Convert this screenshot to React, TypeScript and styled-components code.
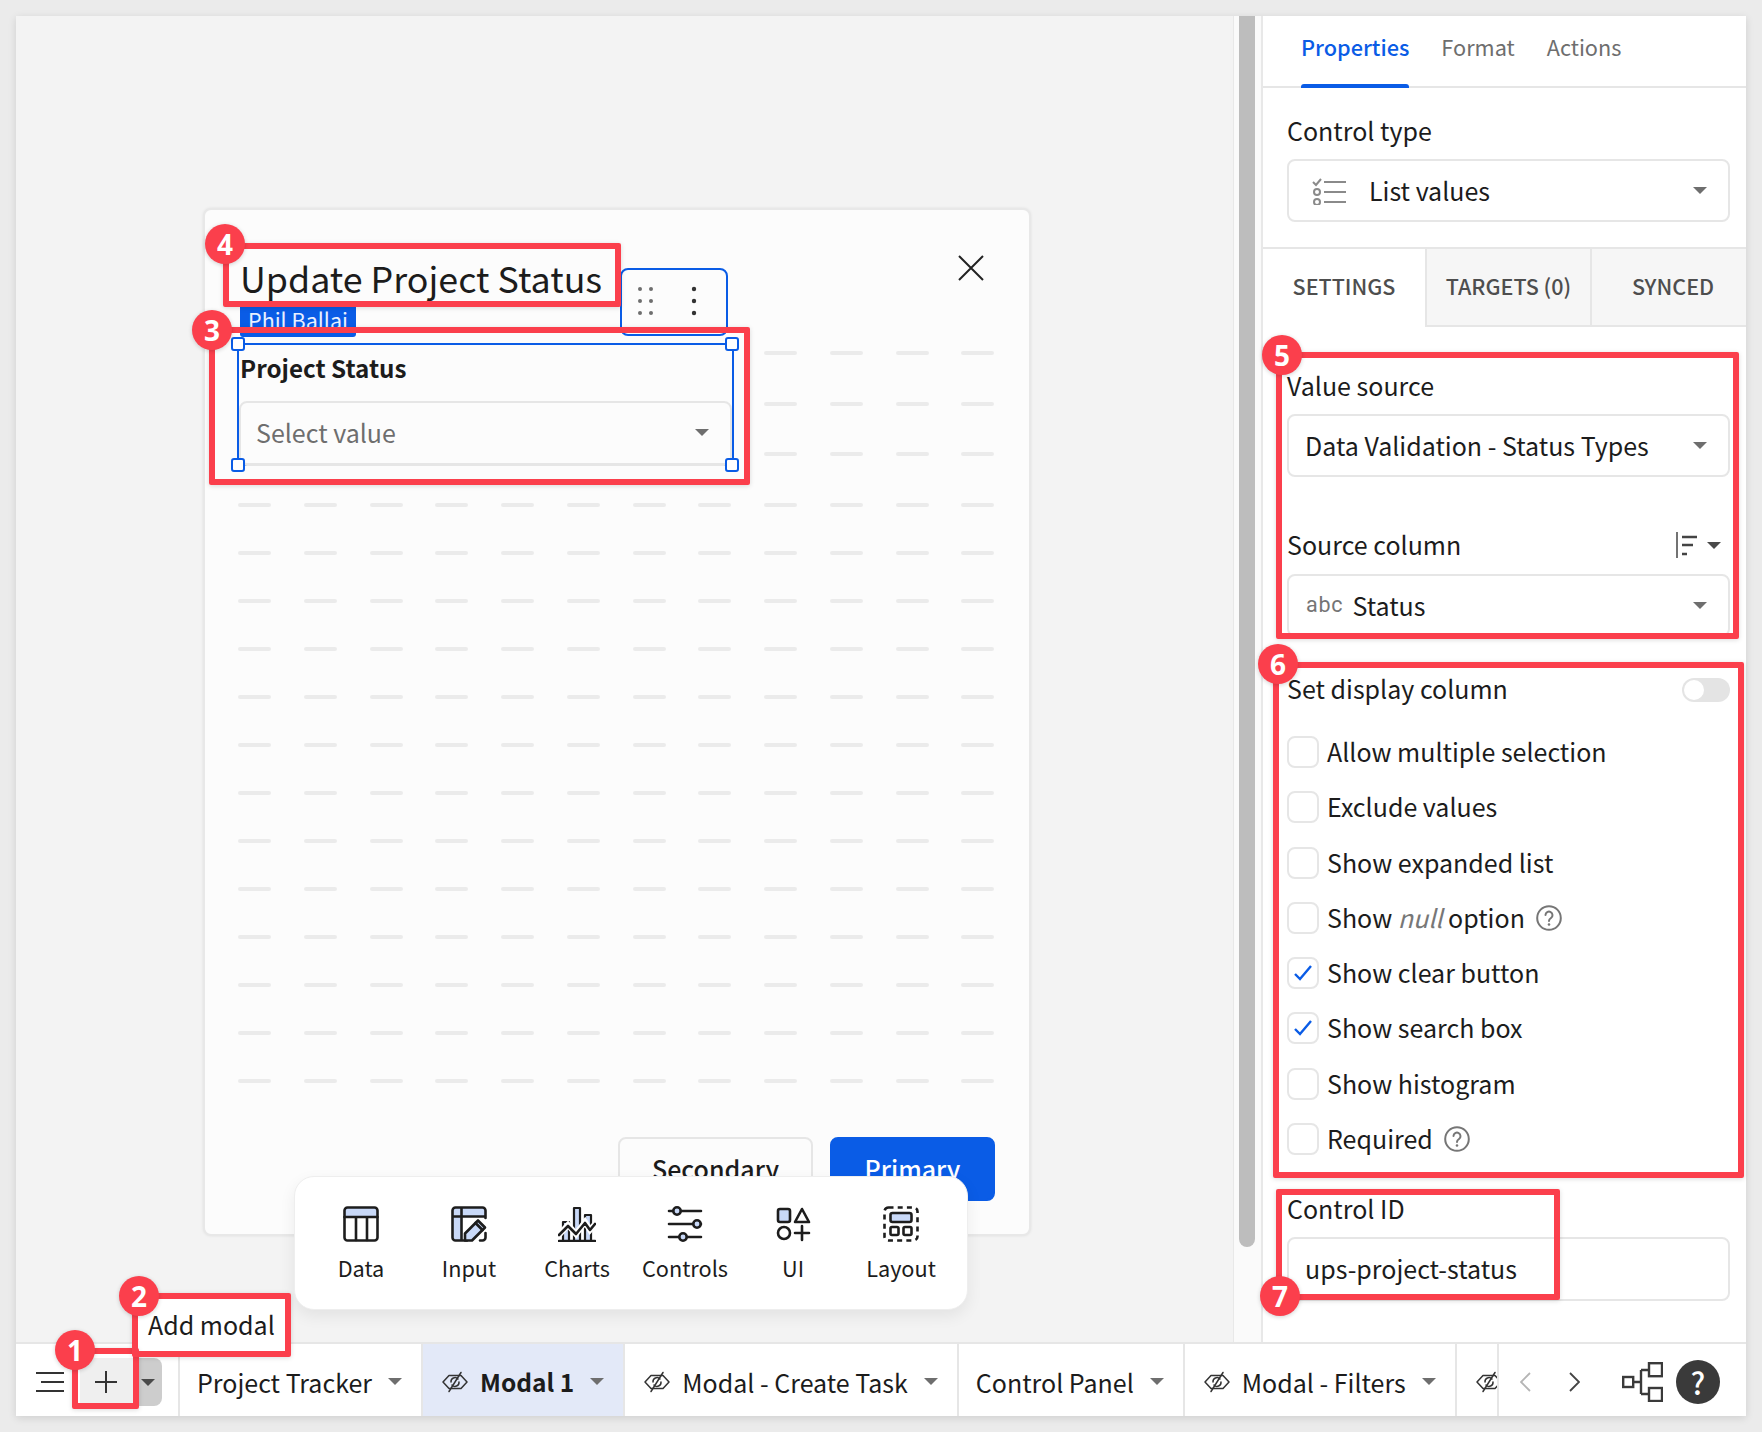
import React from "react";
import styled, { createGlobalStyle } from "styled-components";

const BLUE = "#0a5ce6";
const RED = "#fb3f4c";
const INK = "#1c1c1c";
const LINE = "#e6e6e6";
const TINT = "#c9d9f8";
const SANS = `"Noto Sans CJK JP", "Noto Sans", sans-serif`;

const Global = createGlobalStyle`
  html, body { margin: 0; padding: 0; background: #ebebeb; }
  body { font-family: ${SANS}; color: ${INK}; font-size: 25px; line-height: 30px; }
  * { box-sizing: border-box; }
`;

const Page = styled.div`
  position: relative;
  width: 1762px;
  height: 1432px;
  padding: 16px;
  overflow: hidden;
`;
const Window = styled.div`
  width: 1730px;
  height: 1400px;
  display: flex;
  flex-direction: column;
  background: #fff;
  box-shadow: 0 2px 8px rgba(0, 0, 0, 0.12);
`;
const Main = styled.div`
  flex: 1;
  display: flex;
  min-height: 0;
`;
const Canvas = styled.div`
  position: relative;
  flex: 1;
  background: #f3f3f3;
  padding: 192px 0 0 187px;
`;
const Track = styled.div`
  width: 30px;
  background: #fafafa;
  border-left: 1px solid #e8e8e8;
  border-right: 2px solid #e8e8e8;
  padding-left: 5px;
`;
const Thumb = styled.div`
  width: 16px;
  height: 1231px;
  background: #bdbdbd;
  border-radius: 0 0 8px 8px;
`;

/* modal */
const Modal = styled.div`
  position: relative;
  width: 828px;
  height: 1028px;
  background: #fcfcfc;
  border: 2px solid #e8e8e8;
  border-radius: 8px;
  box-shadow: 0 0 3px rgba(0, 0, 0, 0.08);
  display: flex;
  flex-direction: column;
  padding: 43px 34px 33px 32px;
`;
const DashGrid = styled.div`
  position: absolute;
  left: 33px;
  top: 141px;
  display: grid;
  grid-template-columns: repeat(12, 33px);
  column-gap: 32.75px;
  grid-template-rows: repeat(3, 50.7px) repeat(13, 48px);
`;
const Dash = styled.span`
  width: 33px;
  height: 4px;
  border-radius: 2px;
  background: #ebebeb;
`;
const Title = styled.h1`
  position: relative;
  margin: 0 0 0 3px;
  font-size: 35.8px;
  font-weight: 400;
  line-height: 48px;
`;
const CloseIcon = styled.svg`
  position: absolute;
  right: 45px;
  top: 45px;
`;
const ControlBox = styled.div`
  position: relative;
  width: 497px;
  height: 123px;
  margin-top: 42px;
  background: #fcfcfc;
  border: 2px solid ${BLUE};
  padding: 8px 0 0 1px;
`;
const NameTag = styled.div`
  position: absolute;
  left: 1px;
  top: -38px;
  width: 116px;
  height: 30px;
  background: ${BLUE};
  border-radius: 0 0 3px 3px;
  color: #e8f0ff;
  font-size: 21.5px;
  line-height: 25px;
  text-align: center;
`;
const Grip = styled.div`
  position: absolute;
  left: 381px;
  top: -77px;
  width: 108px;
  height: 68px;
  border: 2px solid ${BLUE};
  border-radius: 8px;
  background: #fcfcfc;
`;
const GripIcon = styled.svg`
  position: absolute;
  left: 15px;
  top: 16px;
`;
const Handle = styled.span<{ $r?: boolean; $b?: boolean }>`
  position: absolute;
  width: 14px;
  height: 14px;
  background: #fff;
  border: 2px solid ${BLUE};
  border-radius: 3px;
  ${(p) => (p.$r ? "right: -7px;" : "left: -8px;")}
  ${(p) => (p.$b ? "bottom: -8px;" : "top: -8px;")}
`;
const ControlLabel = styled.div`
  font-weight: 700;
  font-size: 24.2px;
  line-height: 30px;
`;
const ControlSelect = styled.div`
  display: flex;
  align-items: center;
  justify-content: space-between;
  height: 65px;
  margin: 18px 0 0 -1px;
  width: 493px;
  border: 2px solid ${LINE};
  border-bottom-width: 3px;
  border-radius: 8px;
  padding: 0 21px 2px 15px;
  color: #6e6e6e;
`;
const Footer = styled.div`
  margin-top: auto;
  display: flex;
  justify-content: flex-end;
  gap: 17px;
`;
const Btn = styled.div<{ $primary?: boolean }>`
  height: 64px;
  width: ${(p) => (p.$primary ? "165px" : "195px")};
  display: flex;
  align-items: center;
  justify-content: center;
  padding-bottom: 2px;
  border-radius: 8px;
  font-weight: 500;
  background: ${(p) => (p.$primary ? BLUE : "#fcfcfc")};
  color: ${(p) => (p.$primary ? "#fff" : INK)};
  border: 2px solid ${(p) => (p.$primary ? BLUE : LINE)};
`;

/* action bar */
const ActionBar = styled.div`
  position: absolute;
  left: 278px;
  top: 1160px;
  width: 674px;
  height: 134px;
  background: #fff;
  border: 1px solid #eee;
  border-radius: 20px;
  box-shadow: 0 6px 16px rgba(0, 0, 0, 0.07);
  display: flex;
  padding: 0 12px;
`;
const Action = styled.div`
  width: 108px;
  display: flex;
  flex-direction: column;
  align-items: center;
  padding-top: 29px;
`;
const ActionLabel = styled.div`
  margin-top: 11px;
  font-size: 21.7px;
  line-height: 30px;
  white-space: nowrap;
`;

/* right panel */
const Panel = styled.div`
  width: 483px;
  display: flex;
  flex-direction: column;
  background: #fff;
`;
const PanelTabs = styled.div`
  height: 72px;
  border-bottom: 2px solid ${LINE};
  display: flex;
  gap: 32px;
  padding-left: 38px;
  flex: none;
`;
const PanelTab = styled.div<{ $active?: boolean }>`
  position: relative;
  padding-top: 16px;
  font-size: 21.7px;
  color: ${(p) => (p.$active ? BLUE : "#6e6e6e")};
  font-weight: ${(p) => (p.$active ? 500 : 400)};
  ${(p) =>
    p.$active &&
    `&::after { content: ""; position: absolute; left: 0; right: 0; bottom: -2px; height: 4px; background: ${BLUE}; border-radius: 3px 3px 0 0; }`}
`;
const TypeSection = styled.div`
  flex: none;
  height: 161px;
  padding: 29px 16px 0 24px;
  border-bottom: 2px solid ${LINE};
`;
const FieldLabel = styled.div`
  display: flex;
  align-items: center;
  justify-content: space-between;
  line-height: 30px;
  height: 30px;
  padding-bottom: 4px;
`;
const Select = styled.div<{ $mt?: number }>`
  display: flex;
  align-items: center;
  height: 63px;
  margin-top: ${(p) => p.$mt ?? 12}px;
  border: 2px solid ${LINE};
  border-radius: 8px;
  padding: 0 21px 0 16px;
`;
const SelectText = styled.span`
  flex: 1;
  white-space: nowrap;
  padding-bottom: 2px;
`;
const Caret = styled.span<{ $dark?: boolean }>`
  flex: none;
  display: inline-block;
  width: 0;
  height: 0;
  border-left: 7px solid transparent;
  border-right: 7px solid transparent;
  border-top: 7px solid ${(p) => (p.$dark ? "#4a4a4a" : "#6e6e6e")};
`;
const ListIcon = styled.svg`
  margin: 0 23px 0 7px;
  flex: none;
`;
const SubTabs = styled.div`
  flex: none;
  height: 78px;
  display: flex;
`;
const SubTab = styled.div<{ $w: number; $active?: boolean; $pl?: number }>`
  width: ${(p) => p.$w}px;
  flex: ${(p) => (p.$w ? "none" : 1)};
  display: flex;
  align-items: center;
  justify-content: center;
  padding: 0 0 3px ${(p) => p.$pl ?? 0}px;
  font-size: 21.5px;
  font-weight: 500;
  color: #4e4e4e;
  background: ${(p) => (p.$active ? "#fff" : "#f6f6f6")};
  border-bottom: 2px solid ${(p) => (p.$active ? "#fff" : LINE)};
  border-left: ${(p) => (p.$active ? "0" : `2px solid ${LINE}`)};
`;
const Settings = styled.div`
  padding: 45px 16px 0 24px;
`;
const SortGroup = styled.span`
  display: flex;
  align-items: center;
  gap: 10px;
  margin: 2px 9px 0 0;
`;
const TypeTag = styled.span`
  font-family: Roboto, sans-serif;
  font-size: 21.5px;
  color: #757575;
  letter-spacing: 0.8px;
  margin: 0 9px 0 1px;
  padding-bottom: 2px;
`;
const SpacedLabel = styled(FieldLabel)<{ $mt: number }>`
  margin-top: ${(p) => p.$mt}px;
`;
const Toggle = styled.span`
  position: relative;
  width: 48px;
  height: 24px;
  margin-top: 4px;
  border-radius: 12px;
  background: #e4e4e4;
  &::after {
    content: "";
    position: absolute;
    left: 2px;
    top: 2px;
    width: 20px;
    height: 20px;
    border-radius: 50%;
    background: #fff;
  }
`;
const CheckList = styled.div`
  margin-top: 31px;
  display: flex;
  flex-direction: column;
  gap: 23.3px;
`;
const CheckRow = styled.div`
  display: flex;
  align-items: center;
  height: 32px;
  gap: 8px;
`;
const CheckBox = styled.span`
  width: 32px;
  height: 32px;
  flex: none;
  border: 2px solid ${LINE};
  border-radius: 8px;
  display: flex;
  align-items: center;
  justify-content: center;
`;
const CheckText = styled.span`
  padding-bottom: 2px;
  white-space: nowrap;
`;
const Muted = styled.em`
  color: #777;
`;
const HelpIcon = styled.svg`
  margin-left: 3px;
  flex: none;
`;
const TextField = styled.div`
  height: 64px;
  margin-top: 12px;
  border: 2px solid ${LINE};
  border-radius: 8px;
  padding: 0 16px 2px;
  display: flex;
  align-items: center;
`;

/* bottom bar */
const BottomBar = styled.div`
  flex: none;
  height: 74px;
  display: flex;
  background: #fff;
  border-top: 2px solid ${LINE};
`;
const Tools = styled.div`
  flex: none;
  width: 164px;
  display: flex;
  align-items: center;
  padding: 4px 0 0 19px;
  border-right: 2px solid ${LINE};
`;
const PlusBtn = styled.div`
  margin-left: 15px;
  width: 54px;
  height: 48px;
  padding-right: 2px;
  background: #efefef;
  display: flex;
  align-items: center;
  justify-content: center;
`;
const PlusCaret = styled.div`
  width: 28px;
  height: 48px;
  background: #cdcdcd;
  border-radius: 0 8px 8px 0;
  display: flex;
  align-items: center;
  justify-content: center;
`;
const SheetTabs = styled.div`
  flex: 1;
  display: flex;
  overflow: hidden;
  min-width: 0;
`;
const SheetTab = styled.div<{ $active?: boolean }>`
  flex: none;
  display: flex;
  align-items: center;
  gap: 11px;
  padding: 3px 19px 0 17px;
  white-space: nowrap;
  font-size: ${(p) => (p.$active ? "24.5px" : "25px")};
  font-weight: ${(p) => (p.$active ? 700 : 400)};
  background: ${(p) => (p.$active ? "#e3e9f8" : "#fff")};
  border-right: 2px solid ${LINE};
`;
const TabCaret = styled(Caret)`
  margin-left: 5px;
`;
const Right = styled.div`
  flex: none;
  width: 249px;
  display: flex;
  align-items: center;
  border-left: 2px solid ${LINE};
  padding: 4px 0 0 21px;
`;
const ChevRow = styled.div`
  display: flex;
  gap: 38px;
  margin-right: 42px;
`;
const HelpDot = styled.div`
  margin-left: 13px;
  width: 44px;
  height: 44px;
  border-radius: 50%;
  background: #3a3a3a;
  color: #fff;
  font-size: 30px;
  font-weight: 500;
  line-height: 44px;
  text-align: center;
`;
const EyeSvg = styled.svg`
  flex: none;
  margin: 0 1px 0 2px;
`;

/* annotations */
const Box = styled.div<{ $x: number; $y: number; $w: number; $h: number }>`
  position: absolute;
  left: ${(p) => p.$x}px;
  top: ${(p) => p.$y}px;
  width: ${(p) => p.$w}px;
  height: ${(p) => p.$h}px;
  border: 6px solid ${RED};
  border-radius: 2px;
  box-shadow: 0 1px 5px rgba(0, 0, 0, 0.14);
`;
const Badge = styled.div<{ $x: number; $y: number }>`
  position: absolute;
  left: ${(p) => p.$x - 20}px;
  top: ${(p) => p.$y - 20}px;
  width: 40px;
  height: 40px;
  border-radius: 50%;
  background: ${RED};
  color: #fff;
  font-family: "Open Sans", sans-serif;
  font-weight: 700;
  font-size: 28px;
  line-height: 40px;
  text-align: center;
  box-shadow: 0 1px 4px rgba(0, 0, 0, 0.18);
`;
const Tooltip = styled.div`
  position: absolute;
  left: 137px;
  top: 1298px;
  width: 150px;
  height: 56px;
  background: #fff;
  line-height: 52px;
  padding-left: 11px;
  white-space: nowrap;
`;

const Stroke = { fill: "none", stroke: "#1d1d1d", strokeWidth: 2.6, strokeLinejoin: "round" as const, strokeLinecap: "round" as const };

const DataIcon = () => (
  <svg width="36" height="36" viewBox="0 0 36 36">
    <path d="M1.5 11V4.5a3 3 0 0 1 3-3h27a3 3 0 0 1 3 3V11z" fill={TINT} />
    <rect x="1.5" y="1.5" width="33" height="33" rx="3" {...Stroke} />
    <path d="M1.5 11h33M13 11v23M24 11v23" {...Stroke} />
  </svg>
);
const InputIcon = () => (
  <svg width="36" height="36" viewBox="0 0 36 36">
    <path d="M2 10V4a2 2 0 0 1 2-2h28a2 2 0 0 1 2 2v6H11v24H4a2 2 0 0 1-2-2z" fill={TINT} />
    <path d="M16 34.500H4.500a3 3 0 0 1-3-3V4.500a3 3 0 0 1 3-3h27a3 3 0 0 1 3 3V12M1.500 10.500h33M10.500 1.500V34M34.500 27v4.500a3 3 0 0 1-3 3H29" {...Stroke} />
    <path d="M14 34.500v-7L27 14.500l7 7L21 34.500z" fill={TINT} stroke="#1d1d1d" strokeWidth="2.6" strokeLinejoin="round" />
    <path d="M24.500 17l7 7" {...Stroke} />
  </svg>
);
const ChartsIcon = () => (
  <svg width="38" height="36" viewBox="0 0 38 36">
    <path d="M5 16h6v19H5zM16 2h6v33h-6zM27 9h6v26h-6z" fill={TINT} stroke="#1d1d1d" strokeWidth="2.2" strokeLinejoin="round" />
    <path d="M0 30l10-11 8 9 9-12 5 8 6-7" fill="none" stroke="#fff" strokeWidth="6" />
    <path d="M1 29l9-9 8 8 9-11 5 7 5-6" {...Stroke} />
    <path d="M1 35h36" {...Stroke} />
  </svg>
);
const ControlsIcon = () => (
  <svg width="36" height="36" viewBox="0 0 36 36">
    <path d="M2 5h32M2 18h32M2 31h32" {...Stroke} />
    <circle cx="10" cy="5" r="3.700" fill={TINT} stroke="#1d1d1d" strokeWidth="2.600" />
    <circle cx="30" cy="18" r="3.700" fill={TINT} stroke="#1d1d1d" strokeWidth="2.600" />
    <circle cx="16" cy="31" r="3.700" fill={TINT} stroke="#1d1d1d" strokeWidth="2.600" />
  </svg>
);
const UiIcon = () => (
  <svg width="36" height="36" viewBox="0 0 36 36">
    <rect x="3" y="3" width="12" height="13" rx="2" fill={TINT} stroke="#1d1d1d" strokeWidth="2.600" />
    <path d="M27 3l7 13H20z" {...Stroke} />
    <circle cx="9" cy="27" r="6" {...Stroke} />
    <path d="M27 20v14M20 27h14" {...Stroke} />
  </svg>
);
const LayoutIcon = () => (
  <svg width="36" height="36" viewBox="0 0 36 36">
    <rect x="1.500" y="1.500" width="33" height="33" rx="4" fill="none" stroke="#1d1d1d" strokeWidth="2.600" strokeDasharray="5 4.200" />
    <rect x="7.500" y="7" width="21" height="9" rx="2" fill={TINT} stroke="#1d1d1d" strokeWidth="2.600" />
    <rect x="7.500" y="21" width="8" height="8" rx="1.500" {...Stroke} />
    <rect x="20.500" y="21" width="8" height="8" rx="1.500" {...Stroke} />
  </svg>
);
const EyeOff = () => (
  <EyeSvg width="26" height="22" viewBox="0 0 26 22">
    <path d="M1 11l6-6.500h12l6 6.500-6 6.500H7z" fill="none" stroke="#333" strokeWidth="1.500" strokeLinejoin="round" />
    <path d="M9 11a4 4 0 0 1 7-3M17 11a4 4 0 0 1-7 3M19 1.500L7 20.500" fill="none" stroke="#333" strokeWidth="1.500" strokeLinecap="round" />
  </EyeSvg>
);
const Help = () => (
  <HelpIcon width="26" height="26" viewBox="0 0 26 26">
    <circle cx="13" cy="13" r="11.800" fill="none" stroke="#767676" strokeWidth="2" />
    <path d="M9.500 10a3.500 3.500 0 1 1 5.500 3c-1.300.9-2 1.500-2 3" fill="none" stroke="#767676" strokeWidth="2" strokeLinecap="round" />
    <circle cx="13" cy="19.500" r="1.300" fill="#767676" />
  </HelpIcon>
);
const Check = () => (
  <svg width="20" height="18" viewBox="0 0 20 18">
    <path d="M2 10l5 5L18 2" fill="none" stroke={BLUE} strokeWidth="2.400" />
  </svg>
);

const checks: { label: React.ReactNode; on?: boolean; help?: boolean }[] = [
  { label: "Allow multiple selection" },
  { label: "Exclude values" },
  { label: "Show expanded list" },
  { label: <>Show <Muted>null</Muted> option</>, help: true },
  { label: "Show clear button", on: true },
  { label: "Show search box", on: true },
  { label: "Show histogram" },
  { label: "Required", help: true },
];
const actions = [
  { label: "Data", icon: <DataIcon /> },
  { label: "Input", icon: <InputIcon /> },
  { label: "Charts", icon: <ChartsIcon /> },
  { label: "Controls", icon: <ControlsIcon /> },
  { label: "UI", icon: <UiIcon /> },
  { label: "Layout", icon: <LayoutIcon /> },
];

export default function App() {
  return (
    <Page>
      <Global />
      <Window>
        <Main>
          <Canvas>
            <Modal>
              <DashGrid>
                {Array.from({ length: 192 }, (_, i) => <Dash key={i} />)}
              </DashGrid>
              <Title>Update Project Status</Title>
              <CloseIcon width="26" height="26" viewBox="0 0 26 26">
                <path d="M1 1l24 24M25 1L1 25" stroke="#222" strokeWidth="2" fill="none" />
              </CloseIcon>
              <ControlBox>
                <NameTag>Phil Ballai</NameTag>
                <Grip>
                  <GripIcon width="70" height="32" viewBox="0 0 70 32">
                    <g fill="#6e6e6e">
                      {[3, 15, 27].flatMap((y) => [3, 14].map((x) => <circle key={`${x}-${y}`} cx={x} cy={y} r="2" />))}
                    </g>
                    <g fill="#333">
                      {[3, 15, 27].map((y) => <circle key={y} cx="57" cy={y} r="2.200" />)}
                    </g>
                  </GripIcon>
                </Grip>
                <Handle />
                <Handle $r />
                <Handle $b />
                <Handle $r $b />
                <ControlLabel>Project Status</ControlLabel>
                <ControlSelect>
                  <span>Select value</span>
                  <Caret />
                </ControlSelect>
              </ControlBox>
              <Footer>
                <Btn>Secondary</Btn>
                <Btn $primary>Primary</Btn>
              </Footer>
            </Modal>
            <ActionBar>
              {actions.map((a) => (
                <Action key={a.label}>
                  {a.icon}
                  <ActionLabel>{a.label}</ActionLabel>
                </Action>
              ))}
            </ActionBar>
          </Canvas>
          <Track>
            <Thumb />
          </Track>
          <Panel>
            <PanelTabs>
              <PanelTab $active>Properties</PanelTab>
              <PanelTab>Format</PanelTab>
              <PanelTab>Actions</PanelTab>
            </PanelTabs>
            <TypeSection>
              <FieldLabel>Control type</FieldLabel>
              <Select>
                <ListIcon width="34" height="28" viewBox="0 0 34 28">
                  <path d="M1 5l3 3 5-6" fill="none" stroke="#8a8a8a" strokeWidth="2" />
                  <circle cx="5" cy="15" r="3" fill="none" stroke="#8a8a8a" strokeWidth="2" />
                  <circle cx="5" cy="25" r="3" fill="none" stroke="#8a8a8a" strokeWidth="2" />
                  <path d="M12 5h22M12 15h22M12 25h22" stroke="#8a8a8a" strokeWidth="2" />
                </ListIcon>
                <SelectText>List values</SelectText>
                <Caret />
              </Select>
            </TypeSection>
            <SubTabs>
              <SubTab $w={162} $active>SETTINGS</SubTab>
              <SubTab $w={165}>TARGETS (0)</SubTab>
              <SubTab $w={0} $pl={8}>SYNCED</SubTab>
            </SubTabs>
            <Settings>
              <FieldLabel>Value source</FieldLabel>
              <Select>
                <SelectText>Data Validation - Status Types</SelectText>
                <Caret />
              </Select>
              <SpacedLabel $mt={54}>
                Source column
                <SortGroup>
                  <svg width="21" height="26" viewBox="0 0 21 26">
                    <path d="M1 0v26" stroke="#444" strokeWidth="1.500" />
                    <path d="M6 5h15M6 13h11M6 22h5" stroke="#444" strokeWidth="2.600" />
                  </svg>
                  <Caret $dark />
                </SortGroup>
              </SpacedLabel>
              <Select $mt={13}>
                <TypeTag>abc</TypeTag>
                <SelectText>Status</SelectText>
                <Caret />
              </Select>
              <SpacedLabel $mt={38}>
                Set display column
                <Toggle />
              </SpacedLabel>
              <CheckList>
                {checks.map((c, i) => (
                  <CheckRow key={i}>
                    <CheckBox>{c.on && <Check />}</CheckBox>
                    <CheckText>{c.label}</CheckText>
                    {c.help && <Help />}
                  </CheckRow>
                ))}
              </CheckList>
              <SpacedLabel $mt={40}>Control ID</SpacedLabel>
              <TextField>ups-project-status</TextField>
            </Settings>
          </Panel>
        </Main>
        <BottomBar>
          <Tools>
            <svg width="30" height="22" viewBox="0 0 30 22" style={{ flex: "none" }}>
              <path d="M1 2h28M6 11h23M1 20h28" stroke="#333" strokeWidth="2" />
            </svg>
            <PlusBtn>
              <svg width="22" height="22" viewBox="0 0 22 22">
                <path d="M11 0v22M0 11h22" stroke="#333" strokeWidth="2" />
              </svg>
            </PlusBtn>
            <PlusCaret><Caret $dark /></PlusCaret>
          </Tools>
          <SheetTabs>
            <SheetTab>Project Tracker<TabCaret /></SheetTab>
            <SheetTab $active><EyeOff />Modal 1<TabCaret /></SheetTab>
            <SheetTab><EyeOff />Modal - Create Task<TabCaret /></SheetTab>
            <SheetTab>Control Panel<TabCaret /></SheetTab>
            <SheetTab><EyeOff />Modal - Filters<TabCaret /></SheetTab>
            <SheetTab><EyeOff /></SheetTab>
          </SheetTabs>
          <Right>
            <ChevRow>
              <svg width="11" height="20" viewBox="0 0 11 20"><path d="M10 1L1 10l9 9" fill="none" stroke="#b5b5b5" strokeWidth="1.800" /></svg>
              <svg width="11" height="20" viewBox="0 0 11 20"><path d="M1 1l9 9-9 9" fill="none" stroke="#444" strokeWidth="1.800" /></svg>
            </ChevRow>
            <svg width="41" height="40" viewBox="0 0 41 40" style={{ flex: "none" }}>
              <g fill="none" stroke="#3a3a3a" strokeWidth="2.400">
                <rect x="1.200" y="15" width="10" height="10" />
                <rect x="27" y="1.200" width="13" height="13" />
                <rect x="27" y="26" width="13" height="13" />
                <path d="M11 20h8M19 8v24M19 8h8M19 32h8" />
              </g>
            </svg>
            <HelpDot>?</HelpDot>
          </Right>
        </BottomBar>
      </Window>

      <Tooltip>Add modal</Tooltip>
      <Box $x={72} $y={1348} $w={67} $h={61} />
      <Box $x={132} $y={1293} $w={159} $h={64} />
      <Box $x={209} $y={327} $w={541} $h={158} />
      <Box $x={223} $y={243} $w={398} $h={64} />
      <Box $x={1276} $y={352} $w={463} $h={287} />
      <Box $x={1273} $y={662} $w={471} $h={516} />
      <Box $x={1276} $y={1189} $w={284} $h={111} />
      <Badge $x={75} $y={1350}>1</Badge>
      <Badge $x={139} $y={1296}>2</Badge>
      <Badge $x={212} $y={330}>3</Badge>
      <Badge $x={225} $y={244}>4</Badge>
      <Badge $x={1282} $y={355}>5</Badge>
      <Badge $x={1278} $y={664}>6</Badge>
      <Badge $x={1280} $y={1296}>7</Badge>
    </Page>
  );
}
